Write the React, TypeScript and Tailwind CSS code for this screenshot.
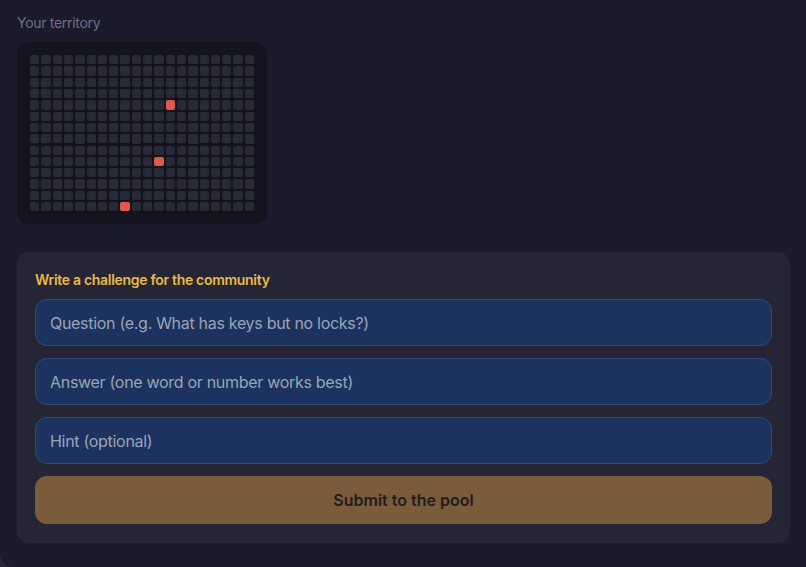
import React from "react";

const COLS = 20;
const ROWS = 14;
const RED = new Set(["4-12", "9-11", "13-8"]);

export default function App() {
  const cells: React.ReactNode[] = [];
  for (let r = 0; r < ROWS; r++) {
    for (let c = 0; c < COLS; c++) {
      const on = RED.has(`${r}-${c}`);
      cells.push(
        <div
          key={`${r}-${c}`}
          className={
            on
              ? "aspect-square rounded-[2px] bg-[#e0574b]"
              : "aspect-square rounded-[2px] bg-[#292a37]"
          }
        />
      );
    }
  }

  return (
    <div className="w-[806px] h-[567px] bg-[#262634]" style={{ fontFamily: "Inter, 'Noto Sans', sans-serif" }}>
      <div className="w-full h-full bg-[#1b1b2b] rounded-bl-[14px] pt-[13px] px-[17px]">
        <div className="text-[14px] leading-[20px] tracking-[-0.3px] text-[#6d6f86]">Your territory</div>
        <div className="mt-[9px] w-[250px] h-[182px] rounded-[12px] bg-[#14141e] p-[13px]">
          <div className="grid grid-cols-[repeat(20,minmax(0,1fr))] gap-[2px]">{cells}</div>
        </div>
        <div className="mt-[28px] w-[773px] rounded-[12px] bg-[#262536] px-[18px] pt-[18px] pb-[19px] flex flex-col">
          <div className="text-[14px] leading-[20px] font-semibold tracking-[-0.3px] text-[#e9b949]">
            Write a challenge for the community
          </div>
          <div className="mt-[9px] flex flex-col gap-[12px]">
            {[
              "Question (e.g. What has keys but no locks?)",
              "Answer (one word or number works best)",
              "Hint (optional)",
            ].map((p) => (
              <div
                key={p}
                className="h-[47px] rounded-[12px] bg-[#1b335e] border border-[#2d4a7c] flex items-center px-[14px] text-[16px] tracking-[-0.3px] text-[#9aa4b9]"
              >
                {p}
              </div>
            ))}
            <div className="h-[48px] rounded-[12px] bg-[#7a5b3b] flex items-center justify-center text-[16px] font-semibold text-[#221d1c]">
              Submit to the pool
            </div>
          </div>
        </div>
      </div>
    </div>
  );
}
